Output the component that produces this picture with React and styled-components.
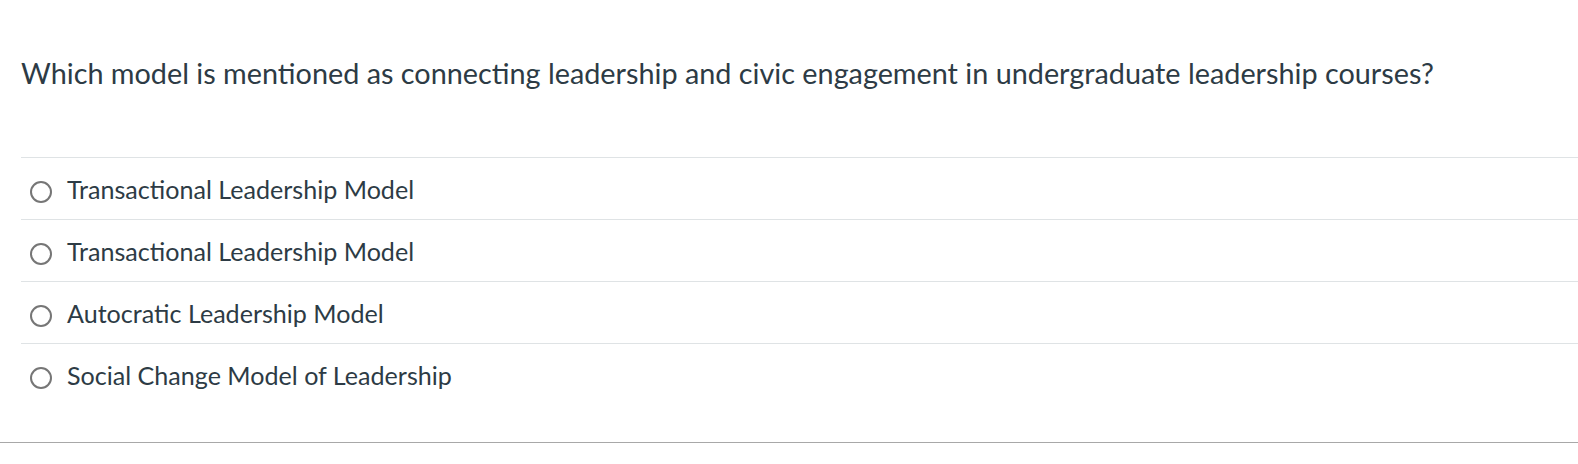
import React from 'react';
import styled, { createGlobalStyle } from 'styled-components';

const GlobalStyle = createGlobalStyle`
  html, body {
    margin: 0;
    padding: 0;
    background: #ffffff;
    font-family: Lato, "Noto Sans", "Liberation Sans", sans-serif;
    color: #2d3b45;
  }
`;

const Page = styled.div`
  width: 1578px;
  height: 464px;
  overflow: hidden;
`;

const Question = styled.div`
  padding: 0 0 0 21px;
  border-bottom: 1px solid #a8a8a8;
  height: 443px;
  box-sizing: border-box;
`;

const Prompt = styled.div`
  padding-top: 55px;
  height: 157px;
  box-sizing: border-box;
  font-size: 28.8px;
  line-height: 36px;
`;

const Answers = styled.ul`
  list-style: none;
  margin: 0;
  padding: 0;
`;

const Answer = styled.li`
  display: flex;
  align-items: center;
  height: 62px;
  box-sizing: border-box;
  border-top: 1px solid #dfe3e5;
  padding-left: 9px;
  gap: 15px;
  font-size: 25.1px;
`;

const Radio = styled.span`
  width: 22px;
  height: 22px;
  box-sizing: border-box;
  border: 2px solid #767676;
  border-radius: 50%;
  flex-shrink: 0;
  margin-top: 6px;
`;

const answers = [
  'Transactional Leadership Model',
  'Transactional Leadership Model',
  'Autocratic Leadership Model',
  'Social Change Model of Leadership',
];

export default function App() {
  return (
    <Page>
      <GlobalStyle />
      <Question>
        <Prompt>
          Which model is mentioned as connecting leadership and civic engagement in undergraduate leadership courses?
        </Prompt>
        <Answers>
          {answers.map((a, i) => (
            <Answer key={i}>
              <Radio />
              <span>{a}</span>
            </Answer>
          ))}
        </Answers>
      </Question>
    </Page>
  );
}
